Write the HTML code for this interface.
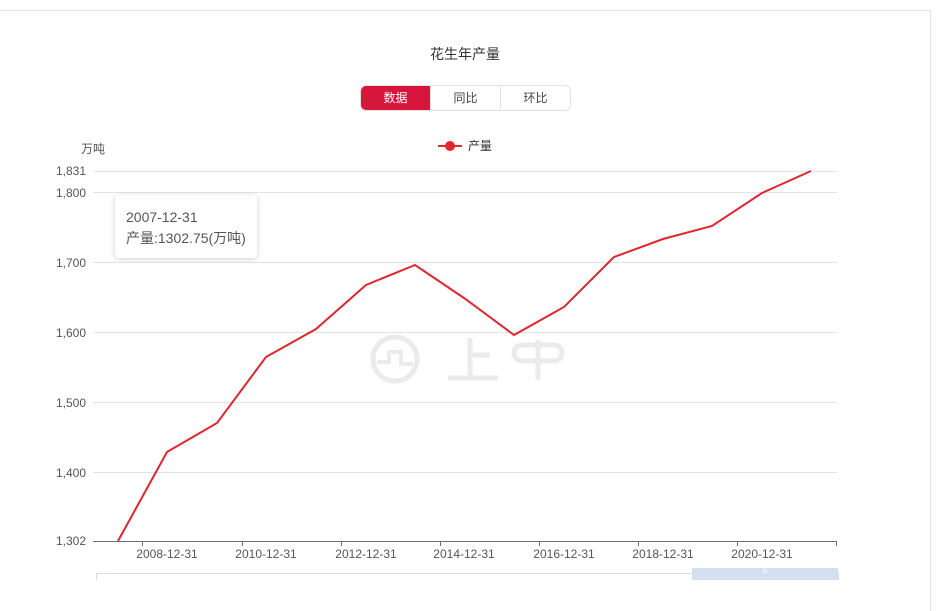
<!DOCTYPE html>
<html><head><meta charset="utf-8"><style>
body{margin:0;width:944px;height:580px;overflow:hidden;background:#fff;font-family:"Liberation Sans","Noto Sans CJK SC",sans-serif;}
.card{position:absolute;left:-1px;top:10px;width:931px;height:600px;border-top:1px solid #e4e4e4;border-right:1px solid #e4e4e4;}
.btns{position:absolute;left:360px;top:85px;width:209px;height:24px;border:1px solid #e2e2e2;border-radius:6px;display:flex;overflow:hidden;font-size:12px;}
.btns div{flex:1;text-align:center;line-height:24px;color:#444;border-left:1px solid #e2e2e2}
.btns div.on{background:#d6163a;color:#fff;border-left:none}
.tip{position:absolute;left:115px;top:195px;width:142px;height:63px;background:#fff;border-radius:4px;box-shadow:0 1px 6px rgba(0,0,0,.2);font-size:14px;color:#555;line-height:22px;padding:0;}
</style></head><body>
<div class="card"></div>
<div style="position:absolute;left:0;width:930px;top:44px;text-align:center;font-size:14px;color:#333">花生年产量</div>
<div class="btns"><div class="on">数据</div><div>同比</div><div>环比</div></div>
<svg width="944" height="580" style="position:absolute;left:0;top:0" font-family="Liberation Sans, Noto Sans CJK SC, sans-serif">
<g stroke="#e0e3ec" stroke-width="1">
<line x1="93" x2="837" y1="171.5" y2="171.5"/><line x1="93" x2="837" y1="192.5" y2="192.5"/>
<line x1="93" x2="837" y1="262.5" y2="262.5"/><line x1="93" x2="837" y1="332.5" y2="332.5"/>
<line x1="93" x2="837" y1="402.5" y2="402.5"/><line x1="93" x2="837" y1="472.5" y2="472.5"/>
</g>
<line x1="93" x2="837" y1="541.5" y2="541.5" stroke="#6e7079"/>
<g stroke="#6e7079"><line x1="142.5" x2="142.5" y1="541" y2="546"/><line x1="242.5" x2="242.5" y1="541" y2="546"/><line x1="341.5" x2="341.5" y1="541" y2="546"/><line x1="440.5" x2="440.5" y1="541" y2="546"/><line x1="539.5" x2="539.5" y1="541" y2="546"/><line x1="638.5" x2="638.5" y1="541" y2="546"/><line x1="737.5" x2="737.5" y1="541" y2="546"/><line x1="836.5" x2="836.5" y1="541" y2="546"/></g>
<g font-size="12" fill="#555" text-anchor="end">
<text x="86" y="175">1,831</text><text x="86" y="197">1,800</text><text x="86" y="267">1,700</text><text x="86" y="337">1,600</text><text x="86" y="407">1,500</text><text x="86" y="477">1,400</text><text x="86" y="545">1,302</text>
</g>
<text x="81" y="153" font-size="12" fill="#555">万吨</text>
<g font-size="12" fill="#555" text-anchor="middle">
<text x="167" y="558">2008-12-31</text><text x="266" y="558">2010-12-31</text><text x="366" y="558">2012-12-31</text><text x="464" y="558">2014-12-31</text><text x="564" y="558">2016-12-31</text><text x="663" y="558">2018-12-31</text><text x="762" y="558">2020-12-31</text>
</g>
<g fill="none" stroke="#ebebeb" stroke-width="5">
<circle cx="395" cy="359" r="22"/>
<path d="M377 362h12v-10h12v12h12" stroke-width="4"/>
<path d="M470 338v40M470 355h20M448 378h50"/>
<path d="M522 345h32a8 8 0 0 1 0 16h-32a8 8 0 0 1 0-16zM538 340v40"/>
</g>
<path d="M118 541L167 452L217 423L266 357L316 329L366 285L415 265L464 298L514 335L564 307L614 257L663 239L712 226L762 193L811 171" fill="none" stroke="#e0262f" stroke-width="2"/>
<line x1="438" x2="462" y1="146" y2="146" stroke="#e0262f" stroke-width="2"/>
<circle cx="450" cy="146" r="5" fill="#e0262f"/>
<text x="468" y="150" font-size="12" fill="#333">产量</text>
<rect x="96.5" y="573.5" width="742" height="20" fill="none" stroke="#d5dbe8"/>
<rect x="692" y="568" width="146" height="20" fill="#d4dff0"/>
<text x="765" y="573" font-size="6" fill="#fff" text-anchor="middle">III</text>
</svg>
<div class="tip"><div style="position:absolute;left:11px;top:11px">2007-12-31</div><div style="position:absolute;left:11px;top:32px;white-space:nowrap">产量:1302.75(万吨)</div></div>
</body></html>
